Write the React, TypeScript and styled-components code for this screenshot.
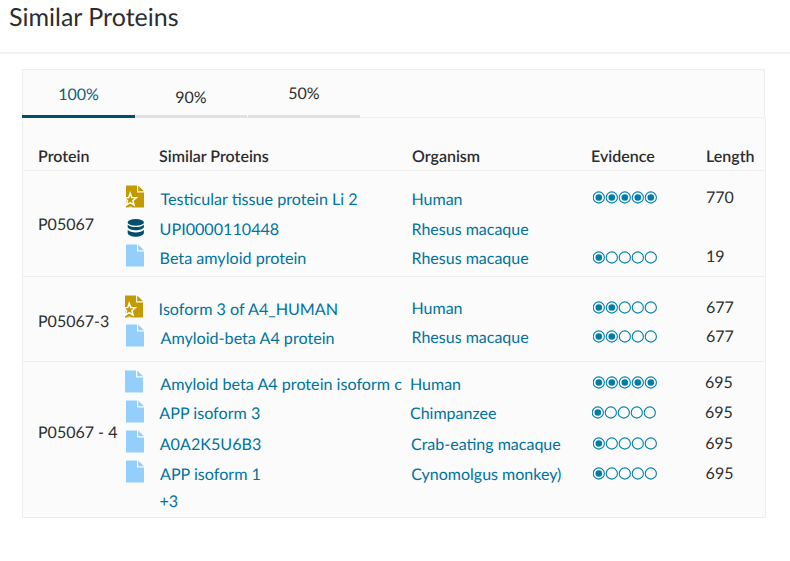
import React from 'react';
import styled, { createGlobalStyle } from 'styled-components';

const GlobalStyle = createGlobalStyle`
  * { box-sizing: border-box; }
  body {
    margin: 0;
    background: #fff;
    color: #2d2d2d;
    font-family: Lato, "Open Sans", sans-serif;
    font-size: 16px;
    line-height: 22px;
    text-rendering: geometricPrecision;
    overflow: hidden;
  }
`;

const Page = styled.main`
  height: 561px;
`;

const Header = styled.header`
  height: 54px;
  padding: 1px 9px 0;
  border-bottom: 2px solid #f1f1f1;
`;

const Title = styled.h1`
  margin: 0;
  font-size: 25px;
  font-weight: 400;
  line-height: 32px;
`;

const Card = styled.section`
  width: 744px;
  margin: 15px 0 0 22px;
`;

const TabBar = styled.nav`
  display: flex;
  width: 743px;
  height: 49px;
  background: #fbfbfb;
  border: 1px solid #eeeeee;
`;

const Tab = styled.button<{ $active?: boolean; $top: number; $width: number }>`
  display: flex;
  justify-content: center;
  align-items: flex-start;
  width: ${(p) => p.$width}px;
  height: 49px;
  margin: -1px 1px 0 0;
  padding: ${(p) => p.$top}px 0 0;
  border: 0;
  border-bottom: 3px solid ${(p) => (p.$active ? '#014f6b' : '#e4dfe0')};
  background: none;
  color: ${(p) => (p.$active ? '#0d5f7d' : '#2d2d2d')};
  font: inherit;
  text-rendering: inherit;
  &:first-child { margin-left: -1px; margin-right: 0; }
`;

const Table = styled.div`
  height: 400px;
  background: #fbfbfb;
  border: 1px solid #eeeeee;
  border-top: 0;
`;

const HeadRow = styled.div`
  display: grid;
  grid-template-columns: 121px 253px 179px 115px 1fr;
  height: 53px;
  padding: 28px 0 0 15px;
  border-bottom: 1px solid #eeeeee;
  font-weight: 600;
  white-space: nowrap;
`;

const HeadCell = styled.span``;

const Group = styled.div<{ $height: number; $top: number }>`
  display: flex;
  height: ${(p) => p.$height}px;
  padding: ${(p) => p.$top}px 0 0 15px;
  border-bottom: 1px solid #eeeeee;
  &:last-child { border-bottom: 0; }
`;

const Accession = styled.div<{ $y: number }>`
  width: 87px;
  padding-top: ${(p) => p.$y}px;
  white-space: nowrap;
`;

const Lines = styled.div`
  flex: 1;
`;

const Line = styled.div<{ $height: number }>`
  display: grid;
  grid-template-columns: 35px 251px 181px 115px 1fr;
  grid-template-rows: ${(p) => p.$height}px;
  height: ${(p) => p.$height}px;
  white-space: nowrap;
`;

const Cell = styled.div<{ $x?: number; $y?: number }>`
  margin: ${(p) => p.$y ?? 0}px 0 0 ${(p) => p.$x ?? 0}px;
`;

const Link = styled.a`
  color: #00739d;
  text-decoration: none;
`;

const NameLink = styled(Link)`
  font-size: 16.14px;
`;

const Drawing = styled.svg`
  display: block;
`;

const DocIcon = ({ reviewed }: { reviewed?: boolean }) => (
  <Drawing width="18" height="23" viewBox="0 0 18 23">
    <path
      d="M0 0.5H11V7.5H18V22.5H0Z M12.2 0.5L18 6.3H12.2Z"
      fill={reviewed ? '#c39b00' : '#94cffc'}
    />
    {reviewed && (
      <>
        <path
          d="M4.2 8.2L5.8 12.5L10.4 12.7L6.9 15.7L8.1 20.2L4.2 17.7L.4 20.2L1.5 15.7L-1.8 12.9L2.7 12.5Z"
          fill="none"
          stroke="#fbfbfb"
          strokeWidth="1.5"
        />
        <path d="M2 22.5Q4.2 20.4 6.8 22.5Z" fill="#fbfbfb" />
      </>
    )}
  </Drawing>
);

const DatabaseIcon = () => (
  <Drawing width="18" height="23" viewBox="0 0 18 23">
    <g fill="#014f6b">
      <ellipse cx="9.8" cy="7.4" rx="8.1" ry="3.4" />
      <path d="M1.7 9.4C4.4 13 15.2 13 17.9 9.4V12.3C16.4 16.2 3.2 16.2 1.7 12.3Z" />
      <path d="M1.7 14.8C4.4 18.4 15.2 18.4 17.9 14.8V18.2C16.4 22.8 3.2 22.8 1.7 18.2Z" />
    </g>
  </Drawing>
);

const Evidence = ({ score }: { score: number }) => (
  <Drawing width="66" height="13" viewBox="0 0 66 13">
    {[0, 1, 2, 3, 4].map((i) => (
      <g key={i}>
        <circle cx={5.8 + i * 13} cy="6.5" r="5.6" fill="none" stroke="#0080ac" strokeWidth="1.1" />
        {i < score && <circle cx={5.8 + i * 13} cy="6.5" r="3.3" fill="#007ca9" />}
      </g>
    ))}
  </Drawing>
);

type Kind = 'reviewed' | 'database' | 'doc';
type Placed<T> = [value: T, x: number, y: number];
type Entry = {
  kind?: Kind;
  ix?: number;
  h?: number;
  name: Placed<string>;
  organism?: Placed<string>;
  evidence?: Placed<number>;
  length?: Placed<number>;
};

type ProteinGroup = { id: string; y: number; height: number; top: number; entries: Entry[] };

const groups: ProteinGroup[] = [
  {
    id: 'P05067', y: 29, height: 106, top: 14,
    entries: [
      { kind: 'reviewed', ix: 1, name: ['Testicular tissue protein Li 2', 0.5, 4], organism: ['Human', 0.5, 4], evidence: [5, 1, 6], length: [770, -1, 2] },
      { kind: 'database', ix: 1, h: 29, name: ['UPI0000110448', -0.4, 4], organism: ['Rhesus macaque', 0.5, 4] },
      { kind: 'doc', ix: 1, name: ['Beta amyloid protein', -0.4, 4], organism: ['Rhesus macaque', 0.5, 4], evidence: [1, 1, 7], length: [19, -1, 2] },
    ],
  },
  {
    id: 'P05067-3', y: 16, height: 85, top: 18,
    entries: [
      { kind: 'reviewed', h: 29, name: ['Isoform 3 of A4_HUMAN', -1.4, 4], organism: ['Human', 0.5, 3], evidence: [2, 1, 6], length: [677, -1, 2] },
      { kind: 'doc', ix: 1, name: ['Amyloid-beta A4 protein', 0.5, 4], organism: ['Rhesus macaque', 0.5, 3], evidence: [2, 1, 6], length: [677, -1, 2] },
    ],
  },
  {
    id: 'P05067 - 4', y: 52, height: 155, top: 8,
    entries: [
      { kind: 'doc', name: ['Amyloid beta A4 protein isoform c', 0.3, 4], organism: ['Human', -1, 4], evidence: [5, 1, 6], length: [695, -2, 2] },
      { kind: 'doc', ix: 1, name: ['APP isoform 3', -0.7, 3], organism: ['Chimpanzee', -1, 3], evidence: [1, 0, 6], length: [695, -2, 2] },
      { kind: 'doc', ix: 1, name: ['A0A2K5U6B3', -0.3, 4], organism: ['Crab-eating macaque', 0, 4], evidence: [1, 1, 7], length: [695, -1.8, 3] },
      { kind: 'doc', ix: 1, name: ['APP isoform 1', 0, 4], organism: ['Cynomolgus monkey)', 0.2, 4], evidence: [1, 1.3, 7], length: [695, -1.4, 3] },
      { h: 20, name: ['+3', -0.5, 1] },
    ],
  },
];

const EntryIcon = ({ kind }: { kind: Kind }) =>
  kind === 'database' ? <DatabaseIcon /> : <DocIcon reviewed={kind === 'reviewed'} />;

const EntryLine = ({ entry }: { entry: Entry }) => {
  const { kind, ix, h = 30, name, organism, evidence, length } = entry;
  return (
    <Line $height={h}>
      <Cell $x={ix}>{kind && <EntryIcon kind={kind} />}</Cell>
      <Cell $x={name[1]} $y={name[2]}><NameLink>{name[0]}</NameLink></Cell>
      <Cell $x={organism?.[1]} $y={organism?.[2]}>{organism && <Link>{organism[0]}</Link>}</Cell>
      <Cell $x={evidence?.[1]} $y={evidence?.[2]}>{evidence && <Evidence score={evidence[0]} />}</Cell>
      <Cell $x={length?.[1]} $y={length?.[2]}>{length?.[0]}</Cell>
    </Line>
  );
};

export default function App() {
  return (
    <>
      <GlobalStyle />
      <Page>
        <Header>
          <Title>Similar Proteins</Title>
        </Header>
        <Card>
          <TabBar>
            <Tab $active $width={113} $top={15}>100%</Tab>
            <Tab $width={112} $top={18}>90%</Tab>
            <Tab $width={112} $top={14}>50%</Tab>
          </TabBar>
          <Table>
            <HeadRow>
              <HeadCell>Protein</HeadCell>
              <HeadCell>Similar Proteins</HeadCell>
              <HeadCell>Organism</HeadCell>
              <HeadCell>Evidence</HeadCell>
              <HeadCell>Length</HeadCell>
            </HeadRow>
            {groups.map((g) => (
              <Group key={g.id} $height={g.height} $top={g.top}>
                <Accession $y={g.y}>{g.id}</Accession>
                <Lines>
                  {g.entries.map((e) => <EntryLine key={e.name[0]} entry={e} />)}
                </Lines>
              </Group>
            ))}
          </Table>
        </Card>
      </Page>
    </>
  );
}
